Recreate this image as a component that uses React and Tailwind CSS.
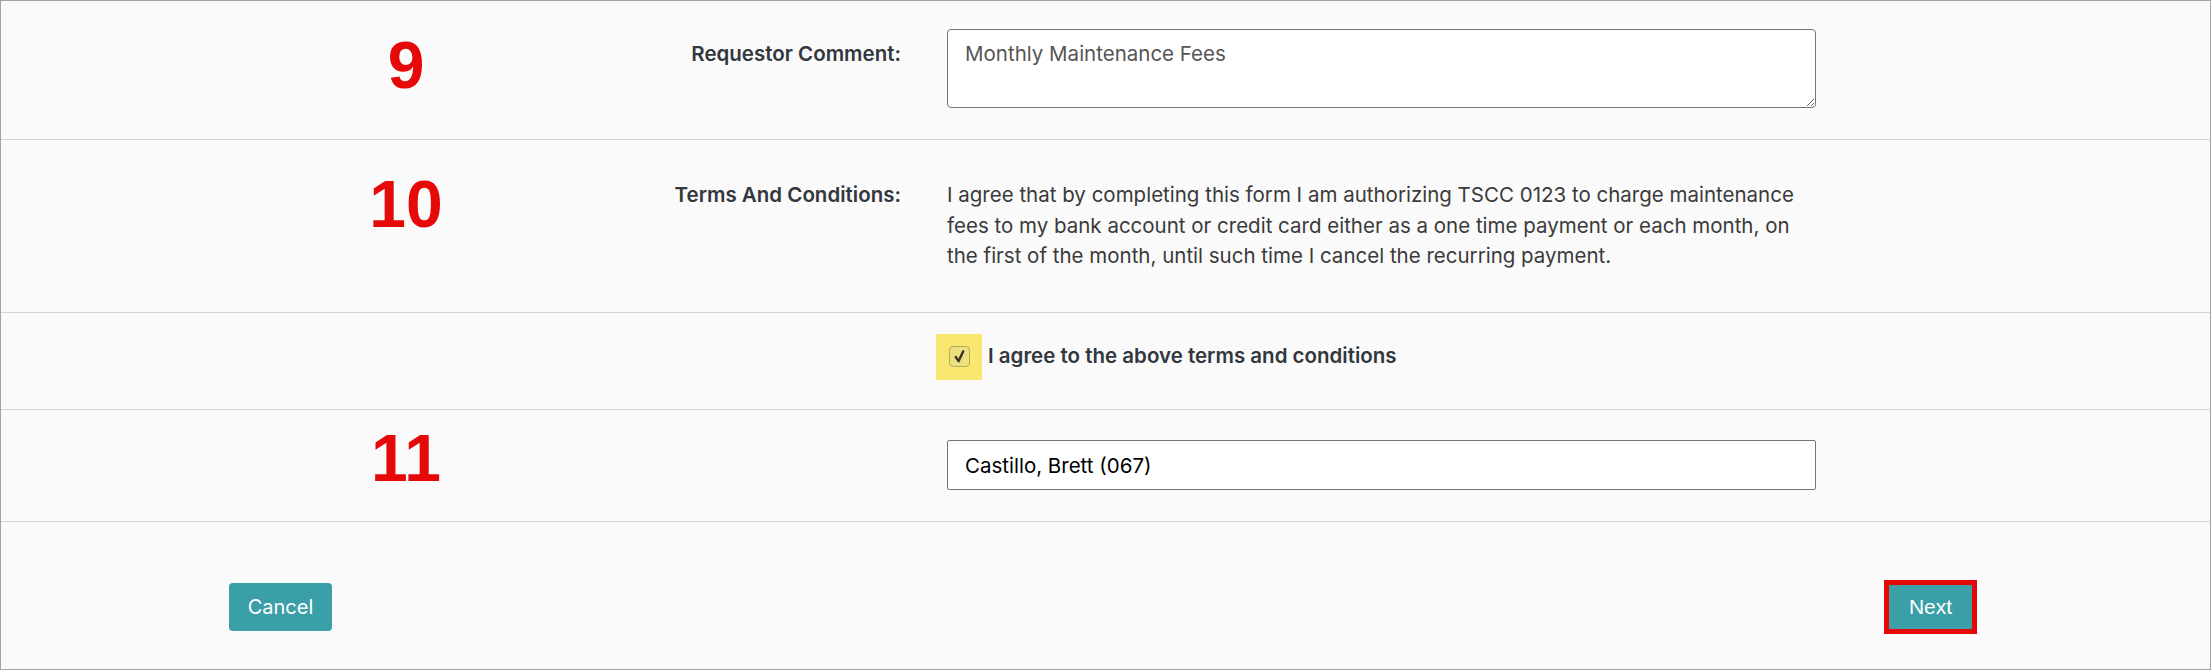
import React from "react";

const page = { fontFamily: "Inter, 'Liberation Sans', sans-serif" };
const arial = { fontFamily: "'Liberation Sans', Arial, sans-serif" };

function StepNumber({ n, className = "" }) {
  return (
    <div
      className={`ml-[330px] w-[150px] shrink-0 text-center text-[66px] font-bold leading-none text-[#e50909] ${className}`}
      style={arial}
    >
      {n}
    </div>
  );
}

export default function App() {
  return (
    <div className="w-[2211px] h-[670px] bg-[#fafafa] border border-[#a3a3a3] text-[#32373d] overflow-hidden" style={page}>
      {/* Requestor comment */}
      <div className="flex items-start h-[139px] border-b border-[#d6d6d6]">
        <StepNumber n="9" className="mt-[31px]" />
        <div className="w-[420px] shrink-0 pt-[38px] text-right text-[20.5px] font-semibold leading-[30px]">
          Requestor Comment:
        </div>
        <div className="ml-[46px] pt-[28px]">
          <textarea
            readOnly
            defaultValue="Monthly Maintenance Fees"
            className="block w-[869px] h-[79px] rounded-[4px] border border-[#767676] bg-white px-[17px] py-[9px] text-[20.5px] leading-[30px] text-[#555] outline-none"
            style={page}
          />
        </div>
      </div>

      {/* Terms */}
      <div className="flex items-start h-[173px] border-b border-[#d6d6d6]">
        <StepNumber n="10" className="mt-[31px]" />
        <div className="w-[420px] shrink-0 pt-[40px] text-right text-[20.5px] font-semibold leading-[30px]">
          Terms And Conditions:
        </div>
        <p className="ml-[46px] w-[869px] pt-[40px] text-[20.5px] leading-[30.5px] text-[#3a3a3a]">
          I agree that by completing this form I am authorizing TSCC 0123 to charge maintenance fees to my bank
          account or credit card either as a one time payment or each month, on the first of the month, until such
          time I cancel the recurring payment.
        </p>
      </div>

      {/* Agree checkbox */}
      <div className="flex items-center h-[97px] border-b border-[#d6d6d6] pl-[935px] pb-[9px]">
        <label className="flex items-center">
          <span className="flex items-center justify-center w-[46px] h-[46px] bg-[#f9e76f]">
            <span className="flex items-center justify-center w-[21px] h-[21px] rounded-[4px] border border-[#b5aa5a] bg-[#ede17f]">
              <svg viewBox="0 0 16 16" className="w-[15px] h-[15px]">
                <path d="M4 8.5 L7 13 L12 2.5" fill="none" stroke="#3b3622" strokeWidth="2.6" strokeLinecap="round" strokeLinejoin="round" />
              </svg>
            </span>
          </span>
          <span className="ml-[6px] text-[20.5px] font-semibold">I agree to the above terms and conditions</span>
        </label>
      </div>

      {/* Submitter */}
      <div className="flex items-start h-[112px] border-b border-[#d6d6d6]">
        <StepNumber n="11" className="mt-[15px]" />
        <div className="w-[420px] shrink-0" />
        <div className="ml-[46px] pt-[30px]">
          <input
            readOnly
            value="Castillo, Brett (067)"
            className="block w-[869px] h-[50px] rounded-[2px] border border-[#767676] bg-white px-[17px] text-[20.5px] text-black outline-none"
            style={page}
          />
        </div>
      </div>

      {/* Footer buttons */}
      <div className="flex items-center justify-between pl-[228px] pr-[233px] pt-[58px]">
        <button className="h-[48px] w-[103px] rounded-[4px] bg-[#3a9fa6] text-[20px] text-white">Cancel</button>
        <div className="border-[5px] border-[#e60808]">
          <button className="block h-[44px] w-[83px] bg-[#3a9fa6] text-[21px] text-white" style={arial}>
            Next
          </button>
        </div>
      </div>
    </div>
  );
}
